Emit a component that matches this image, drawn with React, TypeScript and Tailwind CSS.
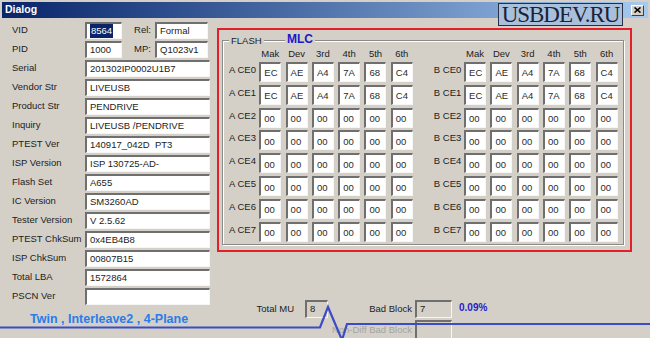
import React from 'react';

const sunken =
  'border-t-2 border-l-2 border-r border-b border-t-[#6f6f6f] border-l-[#6f6f6f] border-r-[#f6f6f6] border-b-[#f6f6f6]';

const infoRows: [string, string][] = [
  ['Serial', '201302IP0002U1B7'],
  ['Vendor Str', 'LIVEUSB'],
  ['Product Str', 'PENDRIVE'],
  ['Inquiry', 'LIVEUSB /PENDRIVE'],
  ['PTEST Ver', '140917_042D  PT3'],
  ['ISP Version', 'ISP 130725-AD-'],
  ['Flash Set', 'A655'],
  ['IC Version', 'SM3260AD'],
  ['Tester Version', 'V 2.5.62'],
  ['PTEST ChkSum', '0x4EB4B8'],
  ['ISP ChkSum', '00807B15'],
  ['Total LBA', '1572864'],
  ['PSCN Ver', ''],
];

const headers = ['Mak', 'Dev', '3rd', '4th', '5th', '6th'];
const ids = ['EC', 'AE', 'A4', '7A', '68', 'C4'];
const zeros = ['00', '00', '00', '00', '00', '00'];
const idRows = [ids, ids, zeros, zeros, zeros, zeros, zeros, zeros];

function FlashGrid({ bank }: { bank: string }) {
  return (
    <div className="grid grid-cols-[26px_repeat(6,22px)] grid-rows-[10px_repeat(8,20px)] gap-x-[4.3px] gap-y-[2.86px]">
      <div />
      {headers.map((h) => (
        <div key={h} className="text-center leading-[10px]">
          {h}
        </div>
      ))}
      {idRows.map((row, i) => (
        <React.Fragment key={i}>
          <div className="pt-[2px] whitespace-nowrap leading-[11px]">
            {bank} CE{i}
          </div>
          {row.map((v, j) => (
            <div key={j} className={`${sunken} bg-white pl-[3px] pt-[2px] flex items-center text-[#2a2a2a]`}>
              {v}
            </div>
          ))}
        </React.Fragment>
      ))}
    </div>
  );
}

const App = () => {
  return (
    <div className="relative w-[650px] h-[338px] overflow-hidden bg-[#d4d0c8] font-['Liberation_Sans',Arial,sans-serif] text-[9.5px] text-[#1c1c1c]">
      {/* Title bar */}
      <div className="pt-[2px] px-[2px]">
        <div className="h-[16px] bg-gradient-to-r from-[#0a246a] to-[#a6caf0] flex items-center justify-between pl-[3px] pr-[4px]">
          <span className="text-white font-bold text-[10.5px]">Dialog</span>
          <div className="w-[13px] h-[11px] bg-[#d4d0c8] border-t border-l border-r border-b border-t-white border-l-white border-r-[#404040] border-b-[#404040] flex items-center justify-center">
            <svg width="7" height="6" viewBox="0 0 7 6">
              <path d="M0.5 0.5 L6.5 5.5 M6.5 0.5 L0.5 5.5" stroke="#000" strokeWidth="1.6" />
            </svg>
          </div>
        </div>
      </div>

      <div className="flex">
        {/* Left info column */}
        <div className="w-[217px] pl-[12px] pt-[4px] flex flex-col gap-[2px]">
          <div className="flex items-center h-[17px]">
            <span className="w-[73px]">VID</span>
            <div className={`${sunken} bg-white w-[37px] h-[17px] pl-[3px] flex items-center`}>
              <span className="bg-[#0a246a] text-white px-[1px]">8564</span>
            </div>
            <span className="w-[33px] text-right pr-[4px]">Rel:</span>
            <div className={`${sunken} bg-white w-[53px] h-[17px] pl-[3px] flex items-center`}>Formal</div>
          </div>
          <div className="flex items-center h-[17px]">
            <span className="w-[73px]">PID</span>
            <div className={`${sunken} bg-white w-[37px] h-[17px] pl-[3px] flex items-center`}>1000</div>
            <span className="w-[33px] text-right pr-[4px]">MP:</span>
            <div className={`${sunken} bg-white w-[53px] h-[17px] pl-[3px] flex items-center`}>Q1023v1</div>
          </div>
          {infoRows.map(([label, value]) => (
            <div key={label} className="flex items-center h-[17px]">
              <span className="w-[73px] whitespace-nowrap">{label}</span>
              <div className={`${sunken} bg-white w-[125px] h-[17px] pl-[3px] flex items-center whitespace-pre`}>
                {value}
              </div>
            </div>
          ))}
          <div className="mt-[5px] ml-[18px] text-[12.5px] font-bold text-[#2b7ce9] leading-[14px] whitespace-nowrap">
            Twin , Interleave2 , 4-Plane
          </div>
        </div>

        {/* Right flash area */}
        <div className="flex flex-col">
          <div className="mt-[10px] w-[415px] h-[224px] border-2 border-[#e3202a]">
            <div className="relative mt-[10px] ml-[3px] w-[402px] h-[205px] border border-[#8a8a8a] shadow-[1px_1px_0_#ffffff,inset_1px_1px_0_#ffffff]">
              <span className="absolute left-[6px] top-[-6px] px-[2px] bg-[#d4d0c8] leading-[11px]">FLASH</span>
              <span className="absolute left-[62px] top-[-8px] px-[2px] bg-[#d4d0c8] text-[12px] font-bold text-[#1919c8] leading-[13px]">
                MLC
              </span>
              <div className="flex pt-[8px] pl-[6px]">
                <FlashGrid bank="A" />
                <div className="ml-[21px]">
                  <FlashGrid bank="B" />
                </div>
              </div>
            </div>
          </div>

          <div className="mt-[48px] flex items-center h-[18px]">
            <span className="w-[88px] text-right pr-[11px]">Total MU</span>
            <div className={`${sunken} bg-[#d4d0c8] w-[23px] h-[18px] pl-[3px] flex items-center`}>8</div>
            <span className="w-[87px] text-right pr-[3px]">Bad Block</span>
            <div className={`${sunken} bg-[#d4d0c8] w-[37px] h-[18px] pl-[3px] flex items-center`}>7</div>
            <span className="ml-[7px] mb-[3px] text-[10px] font-bold text-[#2222cc]">0.09%</span>
          </div>
          <div className="mt-[2px] flex items-center h-[20px]">
            <span className="w-[198px] text-right pr-[3px] text-[#a4a4a4] whitespace-nowrap">Non-Diff Bad Block</span>
            <div className={`${sunken} bg-[#d4d0c8] w-[37px] h-[20px]`} />
          </div>
        </div>
      </div>

      {/* Signal line */}
      <svg className="absolute inset-0 pointer-events-none" width="650" height="338" viewBox="0 0 650 338">
        <polyline
          points="0,327.5 320,327.5 328,307 342,340 347,324 650,324"
          fill="none"
          stroke="#3b4cc4"
          strokeWidth="2.2"
        />
      </svg>

      {/* Watermark */}
      <div className="absolute left-[498px] top-[3px] w-[125px] h-[23px] bg-[#a9c0dc] border border-[#2a2f45] flex items-center justify-center">
        <span className="font-['Liberation_Serif',serif] text-[23px] leading-none tracking-[-1px] text-[#1b2238] whitespace-nowrap">
          USBDEV.RU
        </span>
      </div>
    </div>
  );
};

export default App;
